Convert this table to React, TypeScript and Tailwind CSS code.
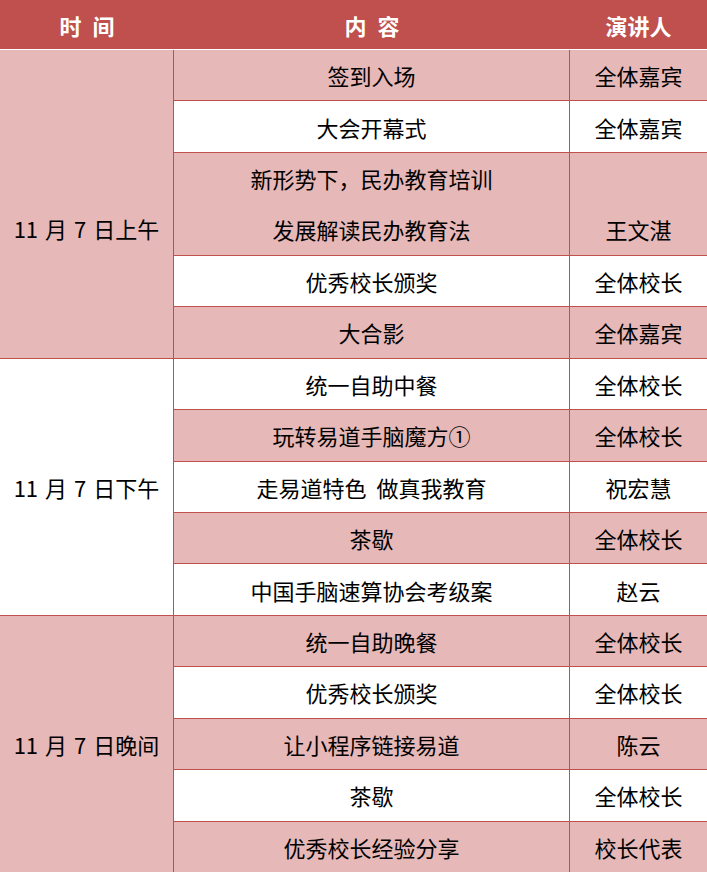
import React from "react";

type Row = { c: string; s: string; pink: boolean; double?: boolean; c2?: string };

const rows: Row[] = [
  { c: "签到入场", s: "全体嘉宾", pink: true },
  { c: "大会开幕式", s: "全体嘉宾", pink: false },
  { c: "新形势下，民办教育培训", c2: "发展解读民办教育法", s: "王文湛", pink: true, double: true },
  { c: "优秀校长颁奖", s: "全体校长", pink: false },
  { c: "大合影", s: "全体嘉宾", pink: true },
  { c: "统一自助中餐", s: "全体校长", pink: false },
  { c: "玩转易道手脑魔方①", s: "全体校长", pink: true },
  { c: "走易道特色  做真我教育", s: "祝宏慧", pink: false },
  { c: "茶歇", s: "全体校长", pink: true },
  { c: "中国手脑速算协会考级案", s: "赵云", pink: false },
  { c: "统一自助晚餐", s: "全体校长", pink: true },
  { c: "优秀校长颁奖", s: "全体校长", pink: false },
  { c: "让小程序链接易道", s: "陈云", pink: true },
  { c: "茶歇", s: "全体校长", pink: false },
  { c: "优秀校长经验分享", s: "校长代表", pink: true },
];

const groups = [
  { day: "上午", span: "row-span-6 pt-[48px]", pink: true, start: 0, end: 5 },
  { day: "下午", span: "row-span-5", pink: false, start: 5, end: 10 },
  { day: "晚间", span: "row-span-5", pink: true, start: 10, end: 15 },
];

export default function App() {
  const font = { fontFamily: '"Noto Sans CJK SC", "Noto Sans", sans-serif' };
  return (
    <div className="w-[707px] h-[872px] flex flex-col bg-white text-black text-[22px] leading-none" style={font}>
      <div className="h-[50px] shrink-0 bg-[#c0504d] border-b border-white grid grid-cols-[174px_396px_137px] text-white font-bold">
        <div className="flex items-center justify-center gap-[11px]">
          <span>时</span>
          <span>间</span>
        </div>
        <div className="flex items-center justify-center gap-[11px]">
          <span>内</span>
          <span>容</span>
        </div>
        <div className="flex items-center justify-center">演讲人</div>
      </div>
      <div className="flex-1 grid grid-cols-[173px_395px_137px] grid-rows-[repeat(16,minmax(0,1fr))] gap-px bg-[#c0504d]">
        {groups.map((g) => (
          <React.Fragment key={g.day}>
            <div className={`${g.span} flex items-center justify-center ${g.pink ? "bg-[#e6b8b7]" : "bg-white"}`}>
              <span>11</span>
              <span className="ml-[7px]">月</span>
              <span className="ml-[7px]">7</span>
              <span className="ml-[7px]">日{g.day}</span>
            </div>
            {rows.slice(g.start, g.end).map((r, i) => {
              const bg = r.pink ? "bg-[#e6b8b7]" : "bg-white";
              if (r.double) {
                return (
                  <React.Fragment key={i}>
                    <div className={`row-span-2 flex flex-col ${bg}`}>
                      <div className="flex-1 flex items-center justify-center">{r.c}</div>
                      <div className="flex-1 flex items-center justify-center">{r.c2}</div>
                    </div>
                    <div className={`row-span-2 flex flex-col ${bg}`}>
                      <div className="flex-1" />
                      <div className="flex-1 flex items-center justify-center">{r.s}</div>
                    </div>
                  </React.Fragment>
                );
              }
              return (
                <React.Fragment key={i}>
                  <div className={`flex items-center justify-center whitespace-pre ${bg}`}>{r.c}</div>
                  <div className={`flex items-center justify-center ${bg}`}>{r.s}</div>
                </React.Fragment>
              );
            })}
          </React.Fragment>
        ))}
      </div>
    </div>
  );
}
